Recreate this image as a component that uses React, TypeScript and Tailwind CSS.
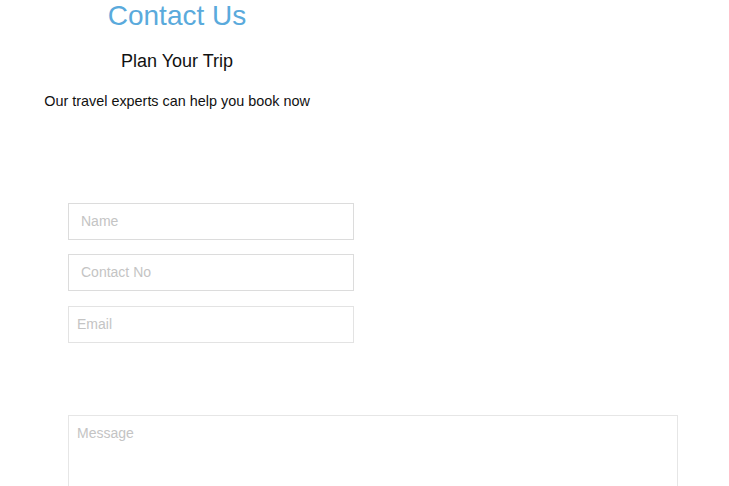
export default function App() {
  return (
    <div className="min-h-[486px] bg-white font-['Liberation_Sans',Arial,sans-serif]">
      {/* Heading block */}
      <div className="w-[354px] text-center">
        <h1 className="text-[28px] leading-[31px] text-[#5aaadc]">Contact Us</h1>
        <h2 className="mt-[17px] text-[18px] leading-normal text-[#111]">Plan Your Trip</h2>
        <p className="mt-[16px] text-[14.4px] leading-normal text-[#111]">Our travel experts can help you book now</p>
      </div>

      {/* Form */}
      <form className="mt-[90px] ml-[68px] flex flex-col">
        <div className="flex w-[286px] flex-col gap-[14px]">
          <input
            placeholder="Name"
            className="h-[37px] w-full border border-[#dcdcdc] px-[12px] text-[14px] text-[#333] placeholder:text-[#c4c4c4] outline-none"
          />
          <input
            placeholder="Contact No"
            className="h-[37px] w-full border border-[#dcdcdc] px-[12px] text-[14px] text-[#333] placeholder:text-[#c4c4c4] outline-none"
          />
          <input
            placeholder="Email"
            className="mt-[1px] h-[37px] w-full border border-[#e3e3e3] px-[8px] text-[14px] text-[#333] placeholder:text-[#c4c4c4] outline-none"
          />
        </div>
        <textarea
          placeholder="Message"
          className="mt-[72px] h-[110px] w-[610px] resize-none border border-[#e6e6e6] px-[8px] py-[7px] text-[14px] text-[#333] placeholder:text-[#c4c4c4] outline-none"
        />
      </form>
    </div>
  );
}
